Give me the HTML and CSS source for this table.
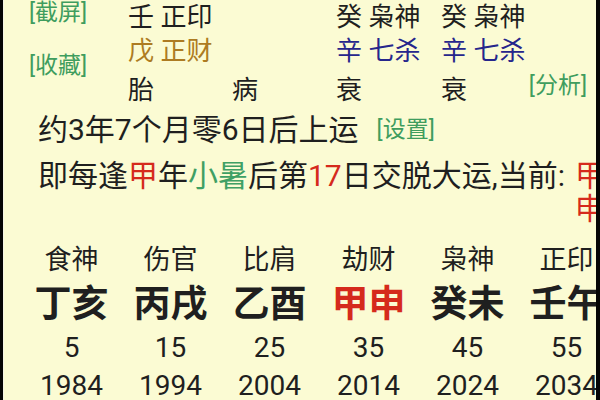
FILE: index.html
```html
<!DOCTYPE html>
<html lang="zh-CN">
<head>
<meta charset="utf-8">
<title>八字排盘</title>
<link rel="stylesheet" href="styles.css">
</head>
<body>
<div class="phone">
  <div class="top">
    <div class="side">
      <span class="link l1">[截屏]</span>
      <span class="link l2">[收藏]</span>
    </div>
    <div class="pillars">
      <div class="cell">壬 正印</div>
      <div class="cell"></div>
      <div class="cell">癸 枭神</div>
      <div class="cell">癸 枭神</div>

      <div class="cell brown">戊 正财</div>
      <div class="cell"></div>
      <div class="cell blue">辛 七杀</div>
      <div class="cell blue">辛 七杀</div>

      <div class="cell">胎</div>
      <div class="cell">病</div>
      <div class="cell">衰</div>
      <div class="cell last">衰<span class="link analyse">[分析]</span></div>
    </div>
  </div>

  <div class="line start">约3年7个月零6日后上运<span class="link setup">[设置]</span></div>
  <div class="line change"><span>即每逢<span class="red">甲</span>年<span class="green">小暑</span>后第<span class="red">17</span>日交脱大运,当前:</span><span class="current red"><span>甲</span><span>申</span></span></div>

  <div class="luck">
    <div class="col"><div class="god">食神</div><div class="gz">丁亥</div><div class="age">5</div><div class="year">1984</div></div>
    <div class="col"><div class="god">伤官</div><div class="gz">丙戌</div><div class="age">15</div><div class="year">1994</div></div>
    <div class="col"><div class="god">比肩</div><div class="gz">乙酉</div><div class="age">25</div><div class="year">2004</div></div>
    <div class="col"><div class="god">劫财</div><div class="gz red">甲申</div><div class="age">35</div><div class="year">2014</div></div>
    <div class="col"><div class="god">枭神</div><div class="gz">癸未</div><div class="age">45</div><div class="year">2024</div></div>
    <div class="col"><div class="god">正印</div><div class="gz">壬午</div><div class="age">55</div><div class="year">2034</div></div>
  </div>
</div>
</body>
</html>
```

FILE: styles.css
```css
html, body {
  margin: 0;
  padding: 0;
  background: #050505;
}

body {
  width: 600px;
  height: 400px;
  overflow: hidden;
  font-family: Roboto, "Noto Sans CJK SC", sans-serif;
  color: #1f1f1f;
}

.phone {
  box-sizing: border-box;
  width: 597px;
  height: 400px;
  margin-left: 3px;
  border-left: 1px solid #f4f4e4;
  border-right: 4px solid #050505;
  background: #fbfbd3;
  overflow: hidden;
}

.top {
  display: flex;
}

.side {
  width: 124px;
  flex: none;
  display: flex;
  flex-direction: column;
  padding-left: 25px;
  box-sizing: border-box;
}

.link {
  color: #3f9d5e;
  font-size: 23px;
}

.l1 {
  line-height: 25px;
}

.l2 {
  line-height: 26px;
  margin-top: 28px;
}

.pillars {
  flex: 1;
  display: grid;
  grid-template-columns: 104px 104px 105px 1fr;
  grid-template-rows: 29px 38px 40px;
  font-size: 26px;
}

.cell {
  display: flex;
  align-items: center;
  white-space: nowrap;
}

.cell.last {
  justify-content: space-between;
  padding-right: 9px;
}

.analyse {
  line-height: 30px;
  margin-top: -3px;
}

.brown {
  color: #ad7b22;
}

.blue {
  color: #26268c;
}

.red {
  color: #d52a1c;
}

.green {
  color: #3fa064;
}

.line {
  font-size: 30px;
  padding-left: 34px;
  white-space: nowrap;
}

.start {
  line-height: 46px;
  display: flex;
  align-items: center;
}

.setup {
  margin-left: 18px;
}

.change {
  display: flex;
  align-items: flex-start;
  line-height: 33px;
  margin-top: 6px;
}

.current {
  display: flex;
  flex-direction: column;
  margin-left: 10px;
}

.luck {
  display: grid;
  grid-template-columns: repeat(6, 99px);
  margin-left: 18px;
  margin-top: 17px;
  width: 594px;
}

.col {
  display: flex;
  flex-direction: column;
  align-items: center;
  white-space: nowrap;
}

.god {
  font-size: 27px;
  line-height: 36px;
}

.gz {
  font-size: 37px;
  font-weight: 700;
  line-height: 54px;
}

.age {
  font-size: 28px;
  line-height: 32px;
}

.year {
  font-size: 28px;
  line-height: 44px;
}
```
